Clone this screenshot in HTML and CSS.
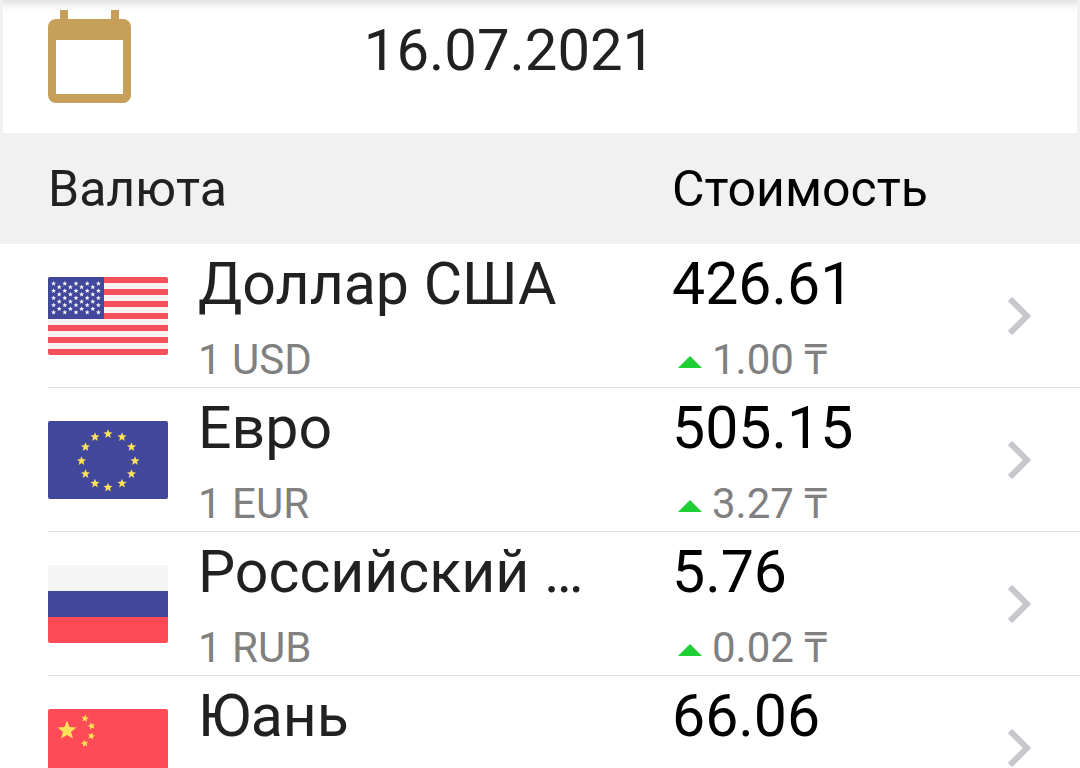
FILE: index.html
```
<!DOCTYPE html>
<html lang="ru">
  <head>
    <meta charset="UTF-8" />
    <meta name="viewport" content="width=device-width, initial-scale=1" />
    <title>Курсы валют</title>
    <link rel="stylesheet" href="styles.css">
  </head>
  <body>
    <svg class="sprite" width="0" height="0" aria-hidden="true">
      <defs>
        <path
          id="star"
          d="M0 -10L2.6 -3.5L9.5 -3.1L4.1 1.3L5.9 8.1L0 4.4L-5.9 8.1L-4.1 1.3L-9.5 -3.1L-2.6 -3.5Z"
        />
        <symbol id="chevron" viewBox="0 0 24 38">
          <path d="M2 2L19 19L2 36" fill="none" stroke="#c7c7cc" stroke-width="6" />
        </symbol>
      </defs>
    </svg>

    <main class="rates">
      <header class="date-bar">
        <button class="calendar" type="button" aria-label="Выбрать дату">
          <svg width="84" height="94" viewBox="0 0 84 94">
            <path
              fill="#c69f5b"
              fill-rule="evenodd"
              d="M12 0h8v9h43V0h8v9h4a8 8 0 0 1 8 8v68a8 8 0 0 1-8 8H8a8 8 0 0 1-8-8V17a8 8 0 0 1 8-8h4zM8 30v54h67V30z"
            />
          </svg>
        </button>
        <time class="date" datetime="2021-07-16">16.07.2021</time>
      </header>

      <table class="table">
        <thead>
          <tr class="row row-head">
            <th class="head-name" scope="col">Валюта</th>
            <th scope="col">Стоимость</th>
          </tr>
        </thead>
        <tbody>
          <tr class="row">
            <td class="currency">
              <svg class="flag" viewBox="0 0 120 78">
                <rect width="120" height="78" fill="#fdf1f1" />
                <path
                  d="M0 3h120M0 15h120M0 27h120M0 39h120M0 51h120M0 63h120M0 75h120"
                  stroke="#f4515b"
                  stroke-width="6"
                />
                <rect width="56" height="42" fill="#41479b" />
                <!-- nine columns of stars, 5 and 4 high in turn -->
                <g fill="#f5f5f5">
                  <g id="column5">
                    <use href="#star" transform="translate(5.6 6.6) scale(.26)" />
                    <use href="#star" transform="translate(5.6 13.8) scale(.26)" />
                    <use href="#star" transform="translate(5.6 21) scale(.26)" />
                    <use href="#star" transform="translate(5.6 28.2) scale(.26)" />
                    <use href="#star" transform="translate(5.6 35.4) scale(.26)" />
                  </g>
                  <use href="#column5" x="11.2" />
                  <use href="#column5" x="22.4" />
                  <use href="#column5" x="33.6" />
                  <use href="#column5" x="44.8" />
                  <g id="column4">
                    <use href="#star" transform="translate(11.2 10.2) scale(.26)" />
                    <use href="#star" transform="translate(11.2 17.4) scale(.26)" />
                    <use href="#star" transform="translate(11.2 24.6) scale(.26)" />
                    <use href="#star" transform="translate(11.2 31.8) scale(.26)" />
                  </g>
                  <use href="#column4" x="11.2" />
                  <use href="#column4" x="22.4" />
                  <use href="#column4" x="33.6" />
                </g>
              </svg>
              <div class="info">
                <div class="name">Доллар США</div>
                <div class="unit">1 USD</div>
              </div>
            </td>
            <td class="cost">
              <div class="value">426.61</div>
              <div class="change">1.00 ₸</div>
            </td>
            <td class="more"><svg width="24" height="38"><use href="#chevron" /></svg></td>
          </tr>

          <tr class="row">
            <td class="currency">
              <svg class="flag" viewBox="0 0 120 78">
                <rect width="120" height="78" fill="#41479b" />
                <g fill="#ffe15a">
                  <use href="#star" transform="translate(60 13) scale(.48)" />
                  <use href="#star" transform="translate(74 16) scale(.48)" />
                  <use href="#star" transform="translate(83.5 26) scale(.48)" />
                  <use href="#star" transform="translate(87 40) scale(.48)" />
                  <use href="#star" transform="translate(83.5 53) scale(.48)" />
                  <use href="#star" transform="translate(74 62.5) scale(.48)" />
                  <use href="#star" transform="translate(60 66.5) scale(.48)" />
                  <use href="#star" transform="translate(47 62.5) scale(.48)" />
                  <use href="#star" transform="translate(37.5 53) scale(.48)" />
                  <use href="#star" transform="translate(33.5 40) scale(.48)" />
                  <use href="#star" transform="translate(37.5 26) scale(.48)" />
                  <use href="#star" transform="translate(47 16) scale(.48)" />
                </g>
              </svg>
              <div class="info">
                <div class="name">Евро</div>
                <div class="unit">1 EUR</div>
              </div>
            </td>
            <td class="cost">
              <div class="value">505.15</div>
              <div class="change">3.27 ₸</div>
            </td>
            <td class="more"><svg width="24" height="38"><use href="#chevron" /></svg></td>
          </tr>

          <tr class="row">
            <td class="currency">
              <svg class="flag" viewBox="0 0 120 78">
                <rect width="120" height="26" fill="#f5f5f5" />
                <rect y="26" width="120" height="26" fill="#41479b" />
                <rect y="52" width="120" height="26" fill="#ff4b55" />
              </svg>
              <div class="info">
                <div class="name">Российский …</div>
                <div class="unit">1 RUB</div>
              </div>
            </td>
            <td class="cost">
              <div class="value">5.76</div>
              <div class="change">0.02 ₸</div>
            </td>
            <td class="more"><svg width="24" height="38"><use href="#chevron" /></svg></td>
          </tr>

          <tr class="row">
            <td class="currency">
              <svg class="flag" viewBox="0 0 120 78">
                <rect width="120" height="78" fill="#ff4b55" />
                <g fill="#ffe15a">
                  <use href="#star" transform="translate(19 21.5)" />
                  <use href="#star" transform="translate(37 9.5) rotate(10) scale(.4)" />
                  <use href="#star" transform="translate(43.5 17) rotate(-15) scale(.4)" />
                  <use href="#star" transform="translate(43.3 27) rotate(15) scale(.4)" />
                  <use href="#star" transform="translate(36.7 34.5) rotate(-10) scale(.4)" />
                </g>
              </svg>
              <div class="info">
                <div class="name">Юань</div>
              </div>
            </td>
            <td class="cost">
              <div class="value">66.06</div>
            </td>
            <td class="more"><svg width="24" height="38"><use href="#chevron" /></svg></td>
          </tr>
        </tbody>
      </table>
    </main>
  </body>
</html>
```
FILE: styles.css
```
* {
  margin: 0;
  padding: 0;
  box-sizing: border-box;
}

body {
  background: #ffffff;
  font-family: Roboto, "Noto Sans", sans-serif;
  color: #212121;
}

.sprite {
  position: absolute;
}

.rates {
  height: 100vh;
  overflow: hidden;
}

.date-bar {
  display: flex;
  align-items: flex-start;
  min-height: 133px;
  padding: 10px 190px 0 45px;
  border: solid #f1f1f1;
  border-width: 0 3px;
  background: linear-gradient(#e2e2e2, #f6f6f6 6px, #ffffff 13px);
}

.calendar {
  border: none;
  background: none;
  cursor: pointer;
}

.calendar svg {
  display: block;
}

.date {
  flex: 1;
  padding-top: 5px;
  font-size: 58px;
  line-height: 70px;
  text-align: center;
}

.table,
.table thead,
.table tbody {
  display: block;
}

.table thead {
  background: #f1f1f1;
}

.row {
  display: grid;
  grid-template-columns: minmax(0, 1fr) 336px 72px;
  min-height: 144px;
  margin-left: 48px;
  border-bottom: 1px solid #e0e0e0;
}

.row-head {
  align-items: center;
  min-height: 111px;
  border-bottom: none;
}

.row th {
  font-size: 50px;
  font-weight: 400;
  text-align: left;
  color: #000000;
}

.row .head-name {
  color: #212121;
}

.currency {
  display: flex;
  align-items: flex-start;
  gap: 30px;
  padding-right: 72px;
}

.flag {
  flex: none;
  width: 120px;
  height: 78px;
  margin-top: 33px;
  border-radius: 2px;
}

.info {
  flex: 1;
  min-width: 0;
}

.name,
.value {
  padding-top: 5px;
  font-size: 59px;
  line-height: 70px;
  white-space: nowrap;
}

.name {
  overflow: hidden;
  text-overflow: ellipsis;
}

.value {
  color: #000000;
}

.unit,
.change {
  padding-top: 16px;
  font-size: 42px;
  line-height: 50px;
  color: #808080;
}

.change {
  display: flex;
  align-items: center;
  gap: 10px;
}

/* green "up" triangle */
.change::before {
  content: "";
  margin: 4px 0 0 6px;
  border: solid transparent;
  border-width: 0 12px 12px;
  border-bottom-color: #1fcf38;
}

.more {
  display: flex;
  align-items: center;
}
```
